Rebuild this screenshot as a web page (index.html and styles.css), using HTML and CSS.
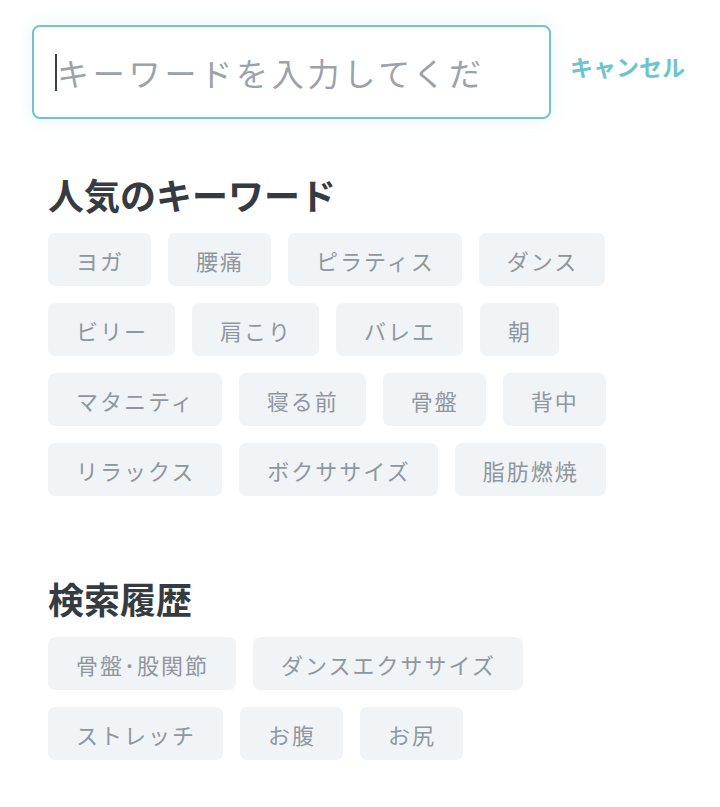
FILE: index.html
```html
<!DOCTYPE html>
<html lang="ja">
<head>
<meta charset="utf-8">
<title>検索</title>
<link rel="stylesheet" href="styles.css">
</head>
<body>
<div class="search-bar">
  <label class="field">
    <span class="caret"></span>
    <input class="field-input" type="text" placeholder="キーワードを入力してくだ">
  </label>
  <button class="cancel" type="button">キャンセル</button>
</div>

<section class="section">
  <h2 class="section-title">人気のキーワード</h2>
  <ul class="tags">
    <li class="tag">ヨガ</li>
    <li class="tag">腰痛</li>
    <li class="tag">ピラティス</li>
    <li class="tag">ダンス</li>
    <li class="tag">ビリー</li>
    <li class="tag">肩こり</li>
    <li class="tag">バレエ</li>
    <li class="tag">朝</li>
    <li class="tag">マタニティ</li>
    <li class="tag">寝る前</li>
    <li class="tag">骨盤</li>
    <li class="tag">背中</li>
    <li class="tag">リラックス</li>
    <li class="tag">ボクササイズ</li>
    <li class="tag">脂肪燃焼</li>
  </ul>
</section>

<section class="section section-history">
  <h2 class="section-title">検索履歴</h2>
  <ul class="tags">
    <li class="tag">骨盤･股関節</li>
    <li class="tag">ダンスエクササイズ</li>
    <li class="tag">ストレッチ</li>
    <li class="tag">お腹</li>
    <li class="tag">お尻</li>
  </ul>
</section>
</body>
</html>
```

FILE: styles.css
```css
* {
  box-sizing: border-box;
}

html, body {
  margin: 0;
  padding: 0;
  background: #ffffff;
}

body {
  font-family: "Noto Sans CJK JP", "Noto Sans", sans-serif;
  color: #353b41;
}

.search-bar {
  display: flex;
  align-items: center;
  padding: 25px 0 0 32px;
}

.field {
  display: flex;
  align-items: center;
  width: 519px;
  height: 94px;
  padding-left: 21px;
  border: 2px solid #74c3ca;
  border-radius: 8px;
  background: #ffffff;
  box-shadow: 0 0 18px rgba(116, 195, 202, 0.16);
}

.caret {
  flex: none;
  width: 2px;
  height: 37px;
  background: #3a3f44;
}

.field-input {
  flex: 1;
  min-width: 0;
  border: none;
  outline: none;
  background: transparent;
  padding: 0;
  font-family: "Noto Sans CJK JP", "Noto Sans", sans-serif;
  font-size: 32px;
  letter-spacing: 3.8px;
  color: #353b41;
}

.field-input::placeholder {
  color: #9ba2a9;
  opacity: 1;
}

.cancel {
  margin: 0 0 12px 19px;
  padding: 0;
  border: none;
  background: none;
  font-family: "Noto Sans CJK JP", "Noto Sans", sans-serif;
  font-size: 23px;
  font-weight: 700;
  color: #6cc4ce;
  cursor: pointer;
}

.section {
  padding: 0 32px 0 48px;
  margin-top: 50px;
}

.section-history {
  margin-top: 77px;
}

.section-title {
  margin: 0 0 14px;
  font-size: 36px;
  line-height: 50px;
  font-weight: 700;
  color: #353b41;
}

.tags {
  display: flex;
  flex-wrap: wrap;
  gap: 17px;
  margin: 0;
  padding: 0;
  list-style: none;
}

.tag {
  display: flex;
  align-items: center;
  height: 53px;
  padding: 0 27px 0 28px;
  border-radius: 7px;
  background: #f1f4f6;
  color: #8e979f;
  font-size: 22px;
  letter-spacing: 2px;
  white-space: nowrap;
}
```
